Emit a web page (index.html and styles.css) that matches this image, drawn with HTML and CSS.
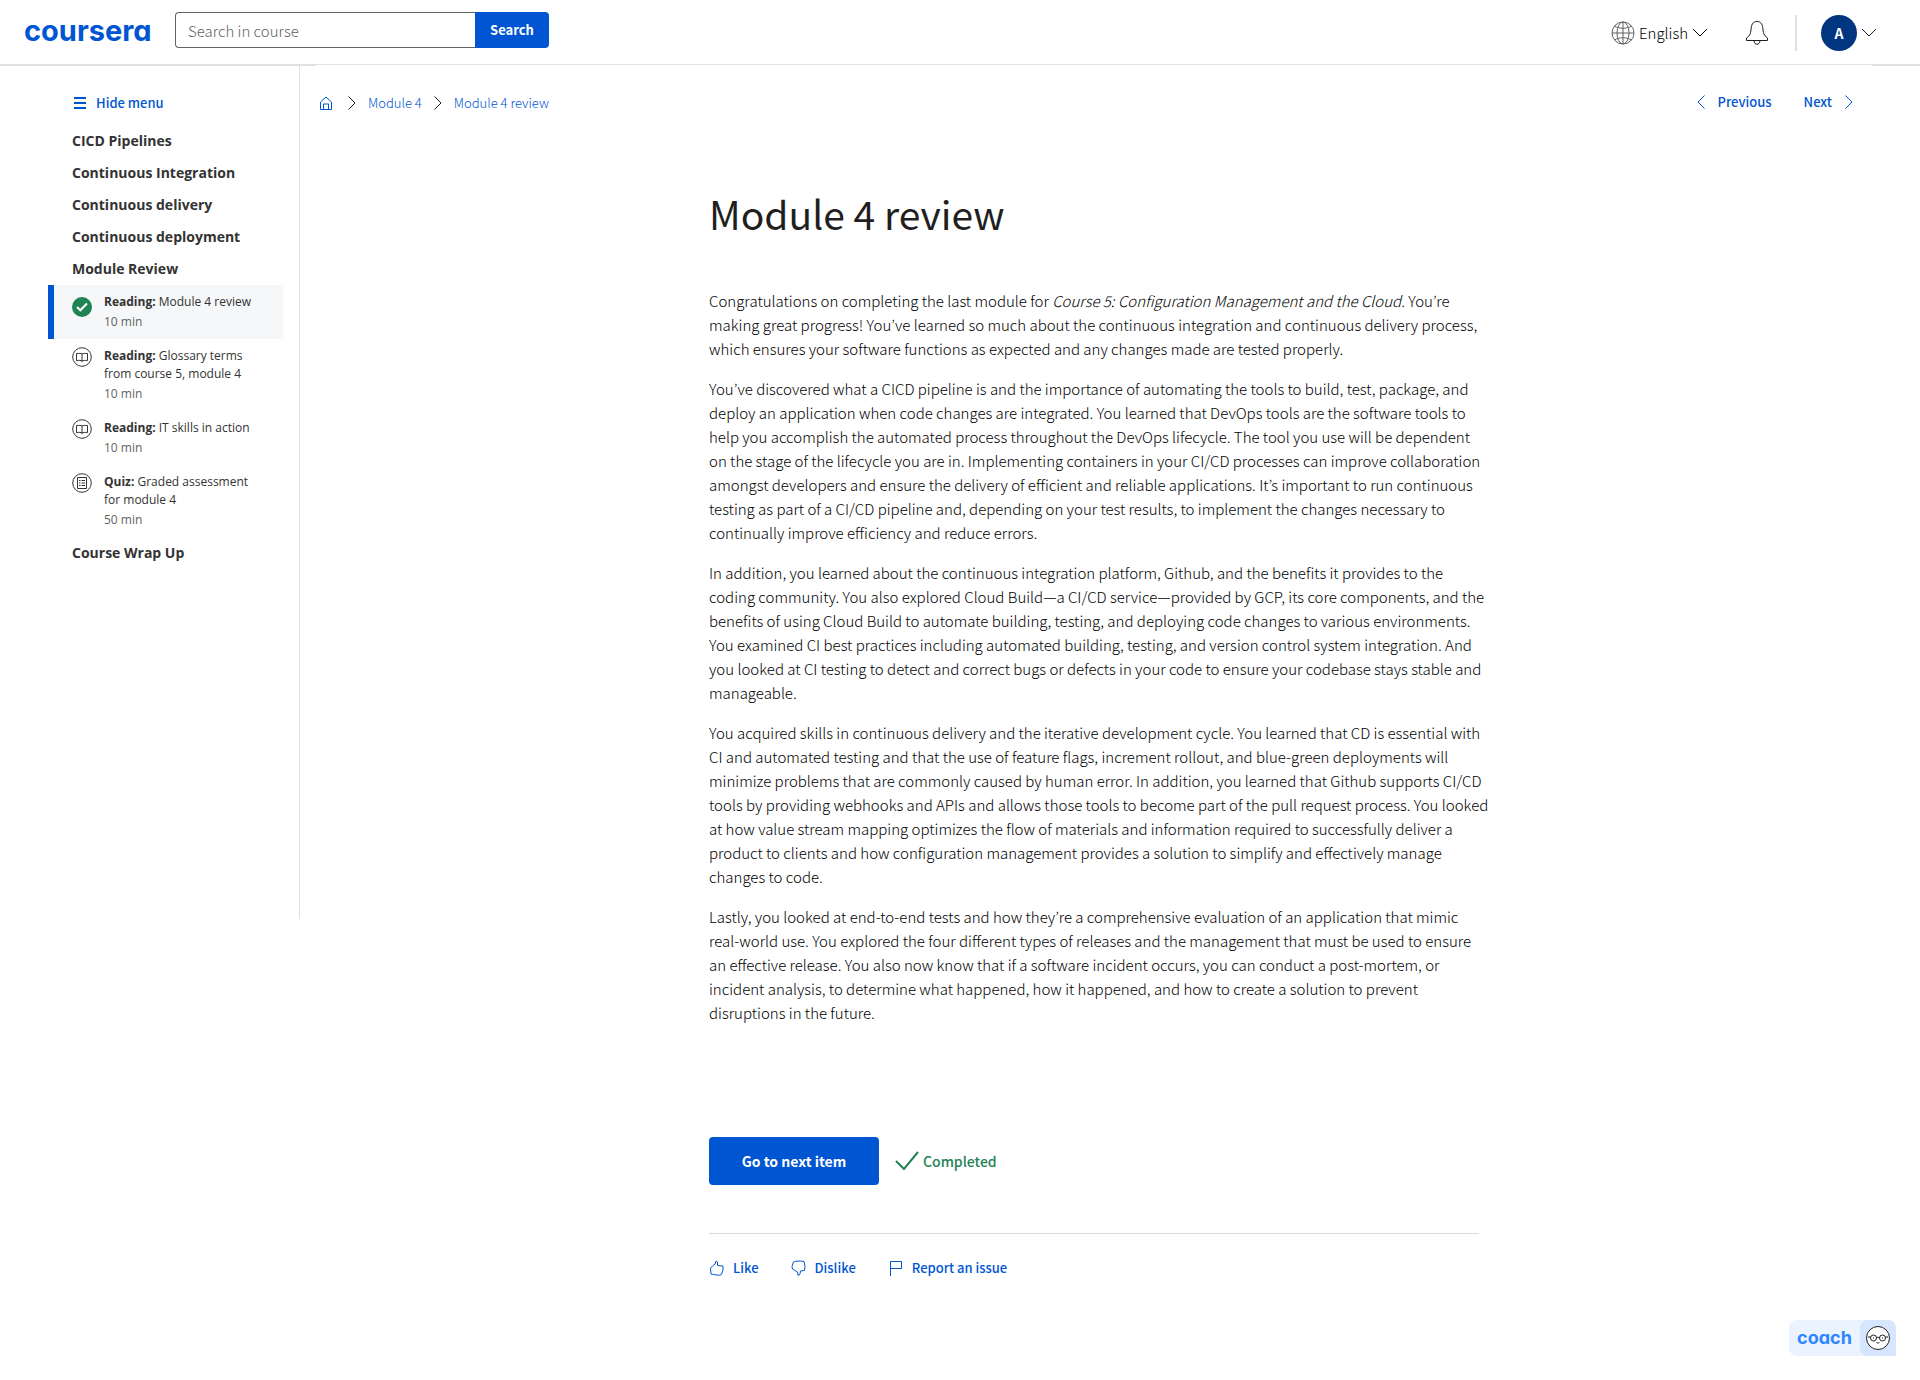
FILE: index.html
```html
<!DOCTYPE html>
<html lang="en">
<head>
<meta charset="utf-8">
<meta name="viewport" content="width=device-width, initial-scale=1">
<title>Module 4 review | Coursera</title>
<link rel="stylesheet" href="styles.css">
</head>
<body>
<header class="topbar">
  <a class="logo" href="#">coursera</a>
  <form class="search" role="search">
    <input class="search-input" type="text" placeholder="Search in course" aria-label="Search in course">
    <button class="search-button" type="button">Search</button>
  </form>
  <div class="account">
    <button class="language" type="button">
      <svg class="globe" viewBox="0 0 24 24"><circle cx="12" cy="12" r="11"/><ellipse cx="12" cy="12" rx="6" ry="11"/><path d="M12 1v22M1 12h22M3.500 5c4.500 3 12.500 3 17 0M3.500 19c4.500-3 12.500-3 17 0"/></svg>
      <span>English</span>
      <svg class="caret" viewBox="0 0 16 10"><path d="M1 1l7 7 7-7"/></svg>
    </button>
    <button class="bell" type="button" aria-label="Notifications">
      <svg viewBox="0 0 24 26"><path d="M1.500 20.500v-2.500c3-2 4-4 4.500-8 .3-5 1.500-8.500 6-8.500s5.700 3.500 6 8.500c.5 4 1.500 6 4.500 8v2.500zM9 20.500c0 5 6 5 6 0"/></svg>
    </button>
    <span class="divider"></span>
    <button class="profile" type="button" aria-label="Account menu">
      <span class="avatar">A</span>
      <svg class="caret" viewBox="0 0 16 10"><path d="M1 1l7 7 7-7"/></svg>
    </button>
  </div>
</header>
<div class="layout">
  <nav class="sidebar" aria-label="Course outline">
    <button class="hide-menu" type="button">
      <svg viewBox="0 0 12 12"><path d="M0 1h12M0 6h12M0 11h12"/></svg>
      <span>Hide menu</span>
    </button>
    <h2 class="section">CICD Pipelines</h2>
    <h2 class="section">Continuous Integration</h2>
    <h2 class="section">Continuous delivery</h2>
    <h2 class="section">Continuous deployment</h2>
    <h2 class="section">Module Review</h2>
    <ul class="items">
      <li><a class="item item-current" href="#">
        <svg class="item-icon" viewBox="0 0 20 20"><circle class="done" cx="10" cy="10" r="10"/><path class="tick" d="M5 10l3.300 3.300L15 6.500"/></svg>
        <span class="item-text"><span><b>Reading:</b> Module 4 review</span><span class="time">10 min</span></span></a></li>
      <li><a class="item" href="#">
        <svg class="item-icon" viewBox="0 0 20 20"><circle cx="10" cy="10" r="9.300"/><path d="M10 7v8M10 7c-1-.7-3-.7-5.500-.5v7c2.500-.2 4.500-.2 5.500.5M10 7c1-.7 3-.7 5.500-.5v7c-2.500-.2-4.500-.2-5.500.5"/></svg>
        <span class="item-text"><span><b>Reading:</b> Glossary terms from course 5, module 4</span><span class="time">10 min</span></span></a></li>
      <li><a class="item" href="#">
        <svg class="item-icon" viewBox="0 0 20 20"><circle cx="10" cy="10" r="9.300"/><path d="M10 7v8M10 7c-1-.7-3-.7-5.500-.5v7c2.500-.2 4.500-.2 5.500.5M10 7c1-.7 3-.7 5.500-.5v7c-2.500-.2-4.500-.2-5.500.5"/></svg>
        <span class="item-text"><span><b>Reading:</b> IT skills in action</span><span class="time">10 min</span></span></a></li>
      <li><a class="item" href="#">
        <svg class="item-icon" viewBox="0 0 20 20"><circle cx="10" cy="10" r="9.300"/><path d="M5.500 4.500h9v11h-9zM7 7.500h1.500M7 10h1.500M7 12.500h1.500M9.500 7.500H13M9.500 10H13M9.500 12.500H13"/></svg>
        <span class="item-text"><span><b>Quiz:</b> Graded assessment for module 4</span><span class="time">50 min</span></span></a></li>
    </ul>
    <h2 class="section">Course Wrap Up</h2>
  </nav>
  <main class="content">
    <div class="pathbar">
      <nav class="crumbs" aria-label="Breadcrumb">
        <a class="home" href="#" aria-label="Home"><svg viewBox="0 0 14 14"><path d="M1.500 13.500V6L7 1l5.500 5v7.500zM4.500 13.500V8h5v5.500"/></svg></a>
        <svg class="chevron" viewBox="0 0 8 14"><path d="M.5 .5L7 7 .5 13.500"/></svg>
        <a href="#">Module 4</a>
        <svg class="chevron" viewBox="0 0 8 14"><path d="M.5 .5L7 7 .5 13.500"/></svg>
        <a href="#">Module 4 review</a>
      </nav>
      <nav class="pager" aria-label="Item navigation">
        <a href="#"><svg class="chevron" viewBox="0 0 8 14"><path d="M7.500 .5L1 7l6.500 6.500"/></svg>Previous</a>
        <a href="#">Next<svg class="chevron" viewBox="0 0 8 14"><path d="M.5 .5L7 7 .5 13.500"/></svg></a>
      </nav>
    </div>
    <article class="reading">
      <h1>Module 4 review</h1>
      <div class="prose">
        <p>Congratulations on completing the last module for <em>Course 5: Configuration Management and the Cloud</em>. You’re making great progress! You’ve learned so much about the continuous integration and continuous delivery process, which ensures your software functions as expected and any changes made are tested properly.</p>
        <p>You’ve discovered what a CICD pipeline is and the importance of automating the tools to build, test, package, and deploy an application when code changes are integrated. You learned that DevOps tools are the software tools to help you accomplish the automated process throughout the DevOps lifecycle. The tool you use will be dependent on the stage of the lifecycle you are in. Implementing containers in your CI/CD processes can improve collaboration amongst developers and ensure the delivery of efficient and reliable applications. It’s important to run continuous testing as part of a CI/CD pipeline and, depending on your test results, to implement the changes necessary to continually improve efficiency and reduce errors.</p>
        <p>In addition, you learned about the continuous integration platform, Github, and the benefits it provides to the coding community. You also explored Cloud Build—a CI/CD service—provided by GCP, its core components, and the benefits of using Cloud Build to automate building, testing, and deploying code changes to various environments. You examined CI best practices including automated building, testing, and version control system integration. And you looked at CI testing to detect and correct bugs or defects in your code to ensure your codebase stays stable and manageable.</p>
        <p>You acquired skills in continuous delivery and the iterative development cycle. You learned that CD is essential with CI and automated testing and that the use of feature flags, increment rollout, and blue-green deployments will minimize problems that are commonly caused by human error. In addition, you learned that Github supports CI/CD tools by providing webhooks and APIs and allows those tools to become part of the pull request process. You looked at how value stream mapping optimizes the flow of materials and information required to successfully deliver a product to clients and how configuration management provides a solution to simplify and effectively manage changes to code.</p>
        <p>Lastly, you looked at end-to-end tests and how they’re a comprehensive evaluation of an application that mimic real-world use. You explored the four different types of releases and the management that must be used to ensure an effective release. You also now know that if a software incident occurs, you can conduct a post-mortem, or incident analysis, to determine what happened, how it happened, and how to create a solution to prevent disruptions in the future.</p>
      </div>
      <div class="complete-row">
        <button class="next-button" type="button">Go to next item</button>
        <span class="completed"><svg viewBox="0 0 24 20"><path d="M1 10l8 8L23 1"/></svg>Completed</span>
      </div>
      <div class="feedback">
        <button type="button"><svg viewBox="0 0 16 16"><path d="M4 5.500L6 4 7 1l1.500 1v3.500L14 6v4l-1.500 4.500-2 .8-6-.8-2.500-.5-.5-6z"/></svg>Like</button>
        <button type="button"><svg viewBox="0 0 16 16"><path d="M4 10.500L6.500 12l.5 3.500 2-1.500.5-3 4-.5.5-4-1-5-3.500-.5-5 .3-2 .7L1 6.500 1.500 9z"/></svg>Dislike</button>
        <button type="button"><svg viewBox="0 0 16 16"><path d="M2.500 16V1.500h11v7h-11"/></svg>Report an issue</button>
      </div>
    </article>
  </main>
</div>
<button class="coach" type="button">
  <span class="coach-name">coach</span>
  <span class="coach-face"><svg viewBox="0 0 24 24"><circle class="face" cx="12" cy="12" r="11.500"/><circle cx="7.500" cy="12" r="3"/><circle cx="16.500" cy="12" r="3"/><path d="M10.500 12c.5-1 2.500-1 3 0M2 11h2.500M19.500 11H22M10.500 16.500c1 .7 2 .7 3 0M7.500 11.500v1M16.500 11.500v1"/></svg></span>
</button>
</body>
</html>
```
FILE: styles.css
```css
:root {
  --blue: #0056d2;
  --ink: #1f1f1f;
  --line: #e1e1e1;
  --source: "Source Sans Pro", "Noto Sans CJK KR", sans-serif;
  --brand: Inter, sans-serif;
}
* { box-sizing: border-box; }
body { margin: 0; background: #fff; color: var(--ink); font: 14px/20px var(--source); }
a { color: var(--blue); text-decoration: none; }
button { padding: 0; border: 0; background: none; color: inherit; font: inherit; cursor: pointer; }
svg { display: block; flex: none; fill: none; stroke: currentColor; }
h1, h2, p, ul { margin: 0; padding: 0; }
ul { list-style: none; }

.topbar { display: flex; align-items: flex-start; padding: 12px 43px 0 24px; height: 66px; border-bottom: 2px solid var(--line); }
.logo { width: 151px; font: 700 29px/38px var(--brand); font-feature-settings: "cv11"; }
.search { display: flex; }
.search-input { width: 300px; height: 36px; padding: 0 12px; border: 1px solid #636363; border-right: 0; border-radius: 4px 0 0 4px; color: var(--ink); font: 300 15px/20px var(--source); }
.search-input::placeholder { color: #636363; opacity: 1; }
.search-button { width: 74px; height: 36px; border-radius: 0 4px 4px 0; background: var(--blue); color: #fff; font-weight: 700; font-size: 13px; }
.account { display: flex; align-items: center; margin-left: auto; padding-top: 3px; height: 39px; }
.language { display: flex; align-items: center; gap: 4px; color: #000; font-weight: 300; font-size: 15px; }
.globe { width: 24px; height: 24px; color: #636363; }
.caret { width: 16px; height: 10px; }
.bell { margin-left: 37px; }
.bell svg { width: 24px; height: 26px; }
.divider { width: 2px; height: 36px; margin: 0 24px 0 26px; background: var(--line); }
.profile { display: flex; align-items: center; gap: 4px; }
.avatar { width: 36px; border-radius: 50%; background: #003580; color: #fff; font-weight: 700; line-height: 36px; }

.layout { display: flex; align-items: flex-start; }
.sidebar { flex: none; width: 300px; min-height: 853px; padding: 27px 16px 0 48px; border-right: 1px solid var(--line); font-family: "Open Sans", sans-serif; }
.hide-menu { display: flex; align-items: center; gap: 10px; margin: 0 0 12px 26px; color: var(--blue); font: 500 13px/20px var(--source); }
.hide-menu svg { width: 12px; height: 12px; stroke-width: 2; }
.section { padding-left: 24px; color: #333; font-size: 14px; font-weight: 700; line-height: 32px; }
.item { display: flex; gap: 12px; padding: 8px 24px 8px 18px; border-left: 6px solid transparent; color: #333; font-size: 12px; line-height: 18px; }
.item-current { border-color: var(--blue); background: #f5f7f8; }
.item b { font-weight: 700; }
.item-icon { width: 20px; height: 20px; }
.item-current .item-icon { margin-top: 4px; }
.item-text { display: flex; flex-direction: column; }
.time { padding-top: 2px; color: #636363; }
.done { fill: #1f8354; stroke: none; }
.tick { stroke: #fff; stroke-width: 2; }

.content { flex: 1; margin: -1px 48px 0 16px; background: #fff; }
.pathbar { display: flex; align-items: flex-start; justify-content: space-between; padding: 27px 19px 0 3px; font-size: 13px; }
.crumbs, .pager, .pager a { display: flex; align-items: center; }
.crumbs { gap: 12px; padding-top: 1px; font-weight: 300; }
.crumbs .chevron { color: var(--ink); }
.home svg { width: 14px; height: 14px; margin-right: 3px; }
.chevron { width: 8px; height: 14px; }
.pager { gap: 32px; font-weight: 500; }
.pager a { gap: 13px; }
.reading { max-width: 770px; margin: 0 auto; padding-bottom: 94px; }
h1 { padding: 70px 0 46px; font-size: 39px; font-weight: 400; line-height: 60px; }
.prose { margin-right: -12px; color: #000; font-size: 15px; font-weight: 300; line-height: 24px; }
.prose p { margin-bottom: 16px; }
.complete-row { display: flex; align-items: center; gap: 16px; margin-top: 112px; }
.next-button { width: 170px; height: 48px; border-radius: 4px; background: var(--blue); color: #fff; font-weight: 700; }
.completed { display: flex; align-items: center; gap: 4px; color: #1f8354; font-weight: 500; }
.completed svg { width: 24px; height: 20px; stroke-width: 2; }
.feedback { display: flex; gap: 32px; margin-top: 48px; padding-top: 24px; border-top: 1px solid #dadada; color: var(--blue); font-size: 13px; font-weight: 500; }
.feedback button { display: flex; align-items: center; gap: 8px; }
.feedback svg { width: 16px; height: 16px; }
.coach { position: fixed; right: 24px; bottom: 24px; display: flex; border-radius: 8px 8px 0 8px; background: #ebf3ff; }
.coach-name { width: 71px; color: #2d86ff; font: 700 18px/36px var(--brand); font-feature-settings: "cv11"; }
.coach-face { padding: 6px; border-radius: 8px 8px 0 8px; background: #d6e6ff; }
.coach-face svg { width: 24px; height: 24px; }
.face { fill: #fff; }
```
